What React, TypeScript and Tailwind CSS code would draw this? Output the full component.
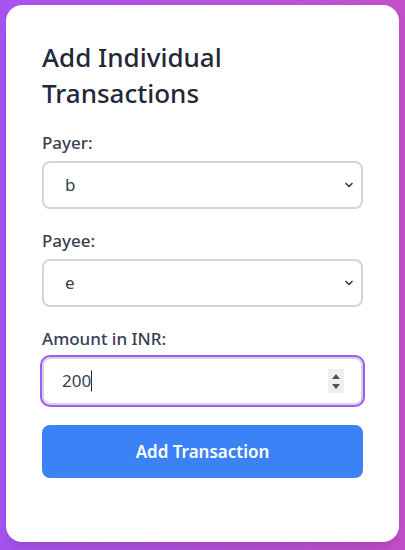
import React, { useState } from "react";

// Small chevron drawn over the select, like the native arrow
const Chevron = () => (
  <svg
    className="pointer-events-none absolute right-[9px] top-1/2 -translate-y-1/2"
    width="10"
    height="10"
    viewBox="0 0 10 10"
    fill="none"
  >
    <path d="M2 3.5l3 3 3-3" stroke="#374151" strokeWidth="1.7" strokeLinecap="round" strokeLinejoin="round" />
  </svg>
);

const SelectField = ({
  label,
  value,
  options,
  onChange,
}: {
  label: string;
  value: string;
  options: string[];
  onChange: (v: string) => void;
}) => (
  <div className="mb-5">
    <label className="mb-1.5 block text-[17px] leading-6 font-medium text-[#374151]">{label}</label>
    <div className="relative">
      <select
        value={value}
        onChange={(e) => onChange(e.target.value)}
        className="block w-full appearance-none rounded-lg border-2 border-gray-300 bg-white py-2.5 pl-[21px] pr-8 text-[17px] leading-6 text-[#374151] outline-none"
      >
        {options.map((o) => (
          <option key={o} value={o}>
            {o}
          </option>
        ))}
      </select>
      <Chevron />
    </div>
  </div>
);

export default function App() {
  const [payer, setPayer] = useState("b");
  const [payee, setPayee] = useState("e");
  const [amount, setAmount] = useState("200");
  const people = ["a", "b", "c", "d", "e"];

  return (
    <div
      className="min-h-[550px] bg-linear-to-r from-[#a653f0] to-[#c34fca] px-[6px] pt-[5px] pb-[9px]"
      style={{ fontFamily: '"Noto Sans", "Open Sans", sans-serif' }}
    >
      <div className="rounded-2xl bg-white px-9 pt-[34px] pb-[64px] shadow-lg">
        <h2 className="mb-5 text-[26px] leading-[36px] font-medium text-[#1f2937]">
          Add Individual Transactions
        </h2>

        <SelectField label="Payer:" value={payer} options={people} onChange={setPayer} />
        <SelectField label="Payee:" value={payee} options={people} onChange={setPayee} />

        <div>
          <label className="mb-1.5 block text-[17px] leading-6 font-medium text-[#374151]">
            Amount in INR:
          </label>
          <div className="relative">
            <input
              type="number"
              value={amount}
              onChange={(e) => setAmount(e.target.value)}
              className="block w-full rounded-lg border-2 border-gray-300 bg-white py-2.5 pl-[18px] pr-4 text-[17px] leading-6 text-[#374151] outline-none ring-2 ring-[#a855f7] [appearance:textfield] [&::-webkit-inner-spin-button]:appearance-none [&::-webkit-outer-spin-button]:appearance-none"
            />
            {/* text caret */}
            <span className="pointer-events-none absolute left-[49px] top-1/2 h-[21px] w-px -translate-y-1/2 bg-[#1f2937]" />
            {/* spinner */}
            <div className="pointer-events-none absolute right-[19px] top-1/2 flex h-[24px] w-[16px] -translate-y-1/2 flex-col items-center justify-center gap-[5px] bg-[#efefef]">
              <svg width="8" height="5" viewBox="0 0 8 5">
                <path d="M4 0L8 5H0z" fill="#505050" />
              </svg>
              <svg width="8" height="5" viewBox="0 0 8 5">
                <path d="M0 0h8L4 5z" fill="#505050" />
              </svg>
            </div>
          </div>
        </div>

        <button className="mt-5 block h-[53px] w-full rounded-lg bg-[#3b82f6] text-[17px] font-semibold text-white">
          Add Transaction
        </button>
      </div>
    </div>
  );
}
